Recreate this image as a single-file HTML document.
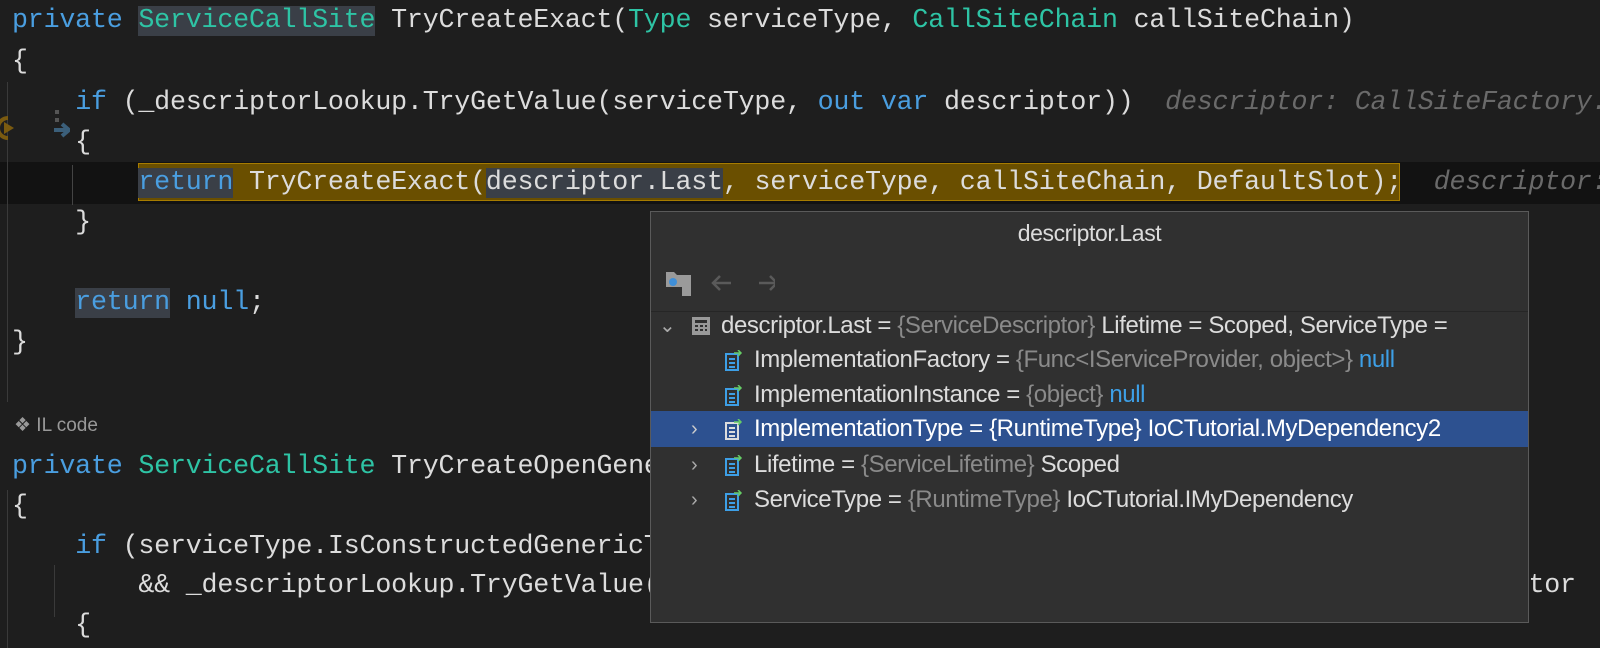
<!DOCTYPE html>
<html><head><meta charset="utf-8"><style>
body{margin:0;width:1600px;height:648px;overflow:hidden;background:#1e1e1e;position:relative;font-family:"Liberation Mono",monospace;}
.l{position:absolute;left:12px;width:1588px;overflow:hidden;height:40px;line-height:40px;font-size:26.67px;letter-spacing:-0.2px;color:#dcdcdc;white-space:pre;}
.k{color:#4a9ee0}.t{color:#2ec4a5}
.hl{background:#3a3f47}
.h{color:#6a6a6a;font-style:italic}
.pop{position:absolute;left:650px;top:211px;width:879px;height:412px;background:#303030;border:1px solid #5a5a5a;box-sizing:border-box;font-family:"Liberation Sans",sans-serif;color:#dcdcdc;font-size:24px;letter-spacing:-0.4px;overflow:hidden;}
.r{position:absolute;left:0;right:0;height:36px;line-height:36px;white-space:pre;}
.g{color:#8a8a8a}.n{color:#3d9fe6}
.ic{position:absolute;top:8px;width:18px;height:21px}
.ch{position:absolute;color:#aaa;font-size:20px}
</style></head><body>
<div style="position:absolute;left:0;top:162px;width:1600px;height:42px;background:#121212"></div>
<div style="position:absolute;left:7px;top:82px;width:1px;height:320px;background:#3a3a3a"></div>
<div style="position:absolute;left:72px;top:165px;width:1px;height:40px;background:#444"></div>
<div style="position:absolute;left:7px;top:490px;width:1px;height:158px;background:#3a3a3a"></div>
<div style="position:absolute;left:54px;top:565px;width:1px;height:52px;background:#3a3a3a"></div>
<div style="position:absolute;left:138px;top:163px;width:1262px;height:38px;background:#6a4f00;border:1px solid #a77c00;box-sizing:border-box"></div>
<div class="l" style="top:1px"><span class="k">private</span> <span class="t hl">ServiceCallSite</span> TryCreateExact(<span class="t">Type</span> serviceType, <span class="t">CallSiteChain</span> callSiteChain)</div>
<div class="l" style="top:42px">{</div>
<div class="l" style="top:83px">    <span class="k">if</span> (_descriptorLookup.TryGetValue(serviceType, <span class="k">out</span> <span class="k">var</span> descriptor))  <span class="h">descriptor: CallSiteFactory.ServiceDescriptorCacheItem</span></div>
<div class="l" style="top:123px">    {</div>
<div class="l" style="top:163px">        <span class="k hl">return</span> TryCreateExact(<span class="hl">descriptor.Last</span>, serviceType, callSiteChain, DefaultSlot);  <span class="h">descriptor: CallSite</span></div>
<div class="l" style="top:203px">    }</div>
<div class="l" style="top:283px">    <span class="k hl">return</span> <span class="k">null</span>;</div>
<div class="l" style="top:323px">}</div>
<div style="position:absolute;left:14px;top:414px;font-family:'Liberation Sans',sans-serif;font-size:19px;color:#999">❖ IL code</div>
<div class="l" style="top:447px"><span class="k">private</span> <span class="t">ServiceCallSite</span> TryCreateOpenGeneric(...)</div>
<div class="l" style="top:487px">{</div>
<div class="l" style="top:527px">    <span class="k">if</span> (serviceType.IsConstructedGenericType</div>
<div class="l" style="top:566px">        &amp;&amp; _descriptorLookup.TryGetValue(serviceType.GetGenericTypeDefinition(), out var descriptor</div>
<div class="l" style="top:606px">    {</div>
<svg style="position:absolute;left:0;top:110px" width="70" height="40"><path d="M8 8 A10 10 0 1 0 8 28" fill="none" stroke="#7a5a10" stroke-width="4"/><path d="M4 12 L14 18 L4 24Z" fill="#7a5a10"/><rect x="55" y="0" width="4" height="4" fill="#555"/><rect x="55" y="8" width="4" height="4" fill="#555"/><path d="M54 20 H68 M62 14 L69 20 L62 26" stroke="#3b5f7a" stroke-width="4" fill="none"/></svg>
<div class="pop">
<div style="position:absolute;left:0;right:0;top:8px;text-align:center;font-size:23px">descriptor.Last</div>
<svg style="position:absolute;left:14px;top:55px" width="110" height="30"><path d="M1 5 h8 l3 3 h14 v12 h-25z" fill="#9a9a9a"/><circle cx="8" cy="15" r="4" fill="#3f8fd8"/><rect x="17" y="19" width="9" height="10" fill="#9a9a9a"/><path d="M48 16 H66 M55 9 L48 16 L55 23" stroke="#5a5a5a" stroke-width="2.5" fill="none"/><path d="M94 16 H112 M105 9 L112 16 L105 23" stroke="#5a5a5a" stroke-width="2.5" fill="none"/></svg>
<div style="position:absolute;left:0;right:0;top:99px;height:1px;background:#262626"></div>
<div class="r" style="top:96px"><span class="ch" style="left:8px">⌄</span><svg style="position:absolute;left:40px;top:8px" width="20" height="20"><rect x="1" y="1" width="18" height="18" fill="#999"/><g fill="#303030"><rect x="4" y="4" width="12" height="3"/><rect x="4" y="9" width="3" height="2"/><rect x="9" y="9" width="3" height="2"/><rect x="14" y="9" width="2" height="2"/><rect x="4" y="13" width="3" height="2"/><rect x="9" y="13" width="3" height="2"/><rect x="14" y="13" width="2" height="2"/></g></svg><span style="position:absolute;left:70px">descriptor.Last = <span class="g">{ServiceDescriptor}</span> Lifetime = Scoped, ServiceType = </span></div>
<div class="r" style="top:130px"><svg class="ic" style="left:74px"><rect x="1" y="4" width="12" height="16" fill="none" stroke="#3d9fe6" stroke-width="2"/><path d="M4 9h6M4 13h6M4 17h6" stroke="#3d9fe6" stroke-width="2"/><path d="M9 3h7M13 0l3 3-3 3" stroke="#6c6" stroke-width="1.5" fill="none"/></svg><span style="position:absolute;left:103px">ImplementationFactory = <span class="g">{Func&lt;IServiceProvider, object&gt;}</span> <span class="n">null</span></span></div>
<div class="r" style="top:165px"><svg class="ic" style="left:74px"><rect x="1" y="4" width="12" height="16" fill="none" stroke="#3d9fe6" stroke-width="2"/><path d="M4 9h6M4 13h6M4 17h6" stroke="#3d9fe6" stroke-width="2"/><path d="M9 3h7M13 0l3 3-3 3" stroke="#6c6" stroke-width="1.5" fill="none"/></svg><span style="position:absolute;left:103px">ImplementationInstance = <span class="g">{object}</span> <span class="n">null</span></span></div>
<div class="r" style="top:199px;background:#2d5190;color:#fff"><span class="ch" style="left:40px;color:#ccc">›</span><svg class="ic" style="left:74px"><rect x="1" y="4" width="12" height="16" fill="none" stroke="#ddd" stroke-width="2"/><path d="M4 9h6M4 13h6M4 17h6" stroke="#ddd" stroke-width="2"/><path d="M9 3h7M13 0l3 3-3 3" stroke="#6c6" stroke-width="1.5" fill="none"/></svg><span style="position:absolute;left:103px">ImplementationType = {RuntimeType} IoCTutorial.MyDependency2</span></div>
<div class="r" style="top:235px"><span class="ch" style="left:40px">›</span><svg class="ic" style="left:74px"><rect x="1" y="4" width="12" height="16" fill="none" stroke="#3d9fe6" stroke-width="2"/><path d="M4 9h6M4 13h6M4 17h6" stroke="#3d9fe6" stroke-width="2"/><path d="M9 3h7M13 0l3 3-3 3" stroke="#6c6" stroke-width="1.5" fill="none"/></svg><span style="position:absolute;left:103px">Lifetime = <span class="g">{ServiceLifetime}</span> Scoped</span></div>
<div class="r" style="top:270px"><span class="ch" style="left:40px">›</span><svg class="ic" style="left:74px"><rect x="1" y="4" width="12" height="16" fill="none" stroke="#3d9fe6" stroke-width="2"/><path d="M4 9h6M4 13h6M4 17h6" stroke="#3d9fe6" stroke-width="2"/><path d="M9 3h7M13 0l3 3-3 3" stroke="#6c6" stroke-width="1.5" fill="none"/></svg><span style="position:absolute;left:103px">ServiceType = <span class="g">{RuntimeType}</span> IoCTutorial.IMyDependency</span></div>
</div>
</body></html>
